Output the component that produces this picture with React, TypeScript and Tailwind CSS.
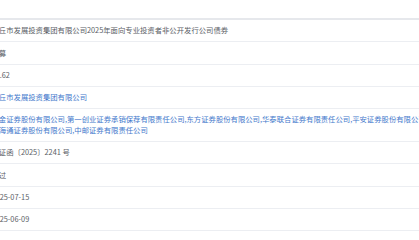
import React from 'react';

// 债券项目详情表（左侧标签列已滚出视口）
const rows: { value: React.ReactNode; link?: boolean }[] = [
  { value: '商丘市发展投资集团有限公司2025年面向专业投资者非公开发行公司债券' },
  { value: '私募' },
  { value: '10.62' },
  { value: '商丘市发展投资集团有限公司', link: true },
  {
    value: (
      <>
        <span>国金证券股份有限公司,第一创业证券承销保荐有限责任公司,东方证券股份有限公司,华泰联合证券有限责任公司,平安证券股份有限公司,国</span>
        <br />
        <span>泰海通证券股份有限公司,中邮证券有限责任公司</span>
      </>
    ),
    link: true,
  },
  { value: '上证函〔2025〕2241 号' },
  { value: '通过' },
  { value: '2025-07-15' },
  { value: '2025-06-09' },
];

const App: React.FC = () => {
  return (
    <div className="w-[419px] h-[240px] overflow-hidden bg-white font-['Noto_Sans_CJK_SC',sans-serif]">
      {/* Header spacer */}
      <div className="h-[20px] border-b-2 border-[#e6e8ec]" />

      <div className="w-[419px]">
        {rows.map((row, i) => (
          <div key={i} className="border-b border-[#eceef2] py-[5.35px] overflow-hidden">
            <div
              className={`-ml-[8.5px] whitespace-nowrap text-[7.35px] leading-[10.6px] ${
                row.link ? 'text-[#4479cc]' : 'text-[#5a5e66]'
              }`}
            >
              {row.value}
            </div>
          </div>
        ))}
      </div>
    </div>
  );
};

export default App;
